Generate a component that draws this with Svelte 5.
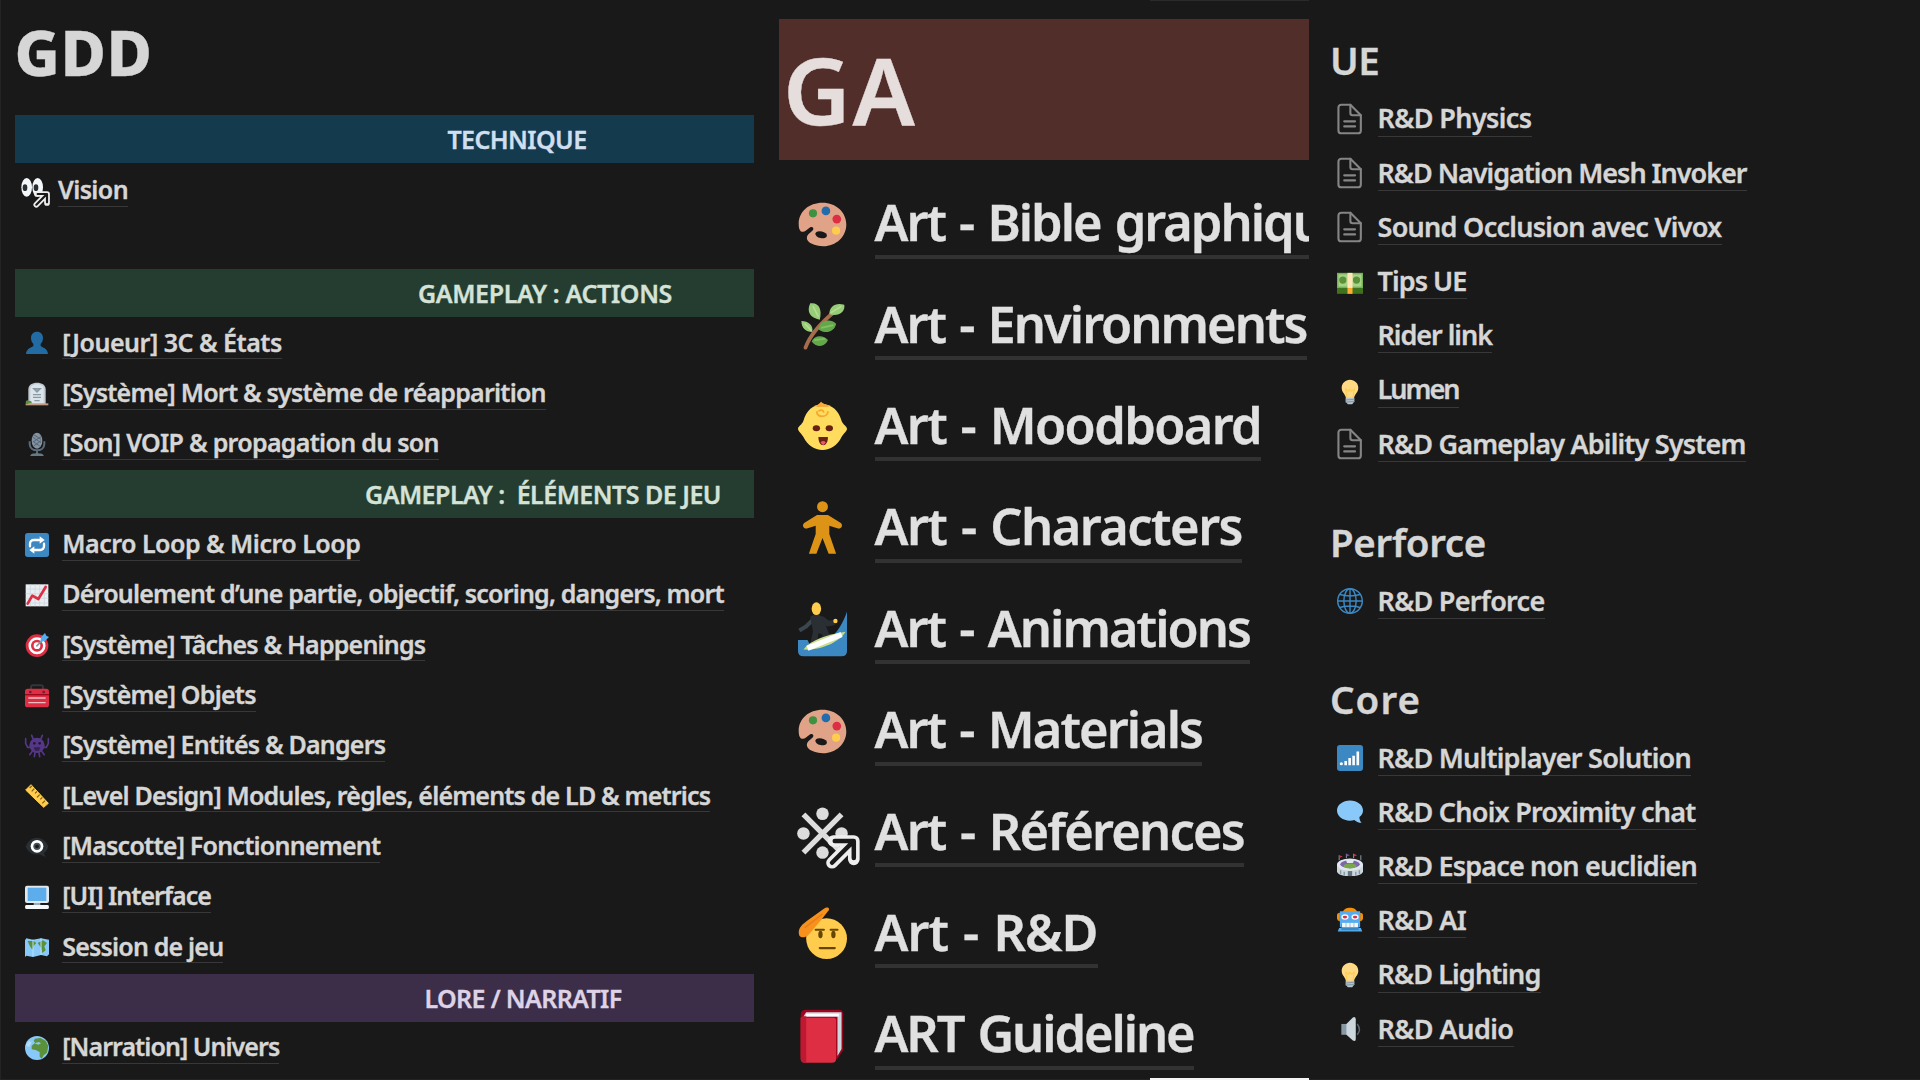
<script>
  // Small pictograms, all drawn on a 36 x 36 grid.
  const linkArrow =
    '<path d="M26 23.500h15V37M40.500 24L25 39.500" fill="none" stroke="#eee" stroke-width="8.600" stroke-linecap="round" stroke-linejoin="round"/><path d="M27 23.500h14V36M40.500 24L25 39.500" fill="none" stroke="#191919" stroke-width="3.300" stroke-linecap="round" stroke-linejoin="round"/>';
  const bulb =
    '<path d="M29.500 12.500C29.500 6 24.500 1 18 1S6.500 6 6.500 12.500c0 6 5.500 9 6 14.500h11c.5-5.500 6-8.500 6-14.500z" fill="#ffd983"/><path d="M14 27l-2-13 4 3 2-3 2 3 4-3-2 13" fill="none" stroke="#ffcc4d" stroke-width="1.500"/><path d="M12 26h12v5l-3 4h-6l-3-4z" fill="#b8c5cd"/><path d="M12 29l12-1M12 32l12-1" stroke="#8899a6" stroke-width="1.500"/>';
  const palette =
    '<path d="M18 2C8 2 .5 8.500.5 17.500c0 3 .5 4.500 1.500 5.500 2.500 1.500 4.500-1.500 7-3 1.500-.8 3 .5 2 2-1.500 2-4.500 3-4.500 6 0 3.500 6 6 12 6C28 34 35.500 27 35.500 18S28 2 18 2z" fill="#e0a387"/><ellipse cx="17" cy="25.500" rx="4.300" ry="2.500" transform="rotate(12 17 25.500)" fill="#191919"/><circle cx="11" cy="9.800" r="3" fill="#3e9140"/><circle cx="20.500" cy="8" r="3.200" fill="#226bac"/><circle cx="28.500" cy="14" r="3.200" fill="#dd2e44"/><circle cx="28" cy="22.500" r="3" fill="#ffcc4d"/>';
  const page =
    '<g fill="none" stroke="#858585" stroke-width="2.900" stroke-linejoin="round" stroke-linecap="round"><path d="M6-4.500h12.500L33 10v21a4 4 0 0 1-4 4H6a4 4 0 0 1-4-4V-.5a4 4 0 0 1 4-4z"/><path d="M18.500-4.500V7a3 3 0 0 0 3 3H33M10 18.500h15M10 25.500h15"/></g>';

  const icons = {
    page,
    bulb,
    palette,
    eyes:
      '<g transform="translate(0 -2)"><ellipse cx="8.500" cy="14.500" rx="8" ry="14" fill="#f5f8fa"/><ellipse cx="25" cy="14.500" rx="8" ry="14" fill="#f5f8fa"/><ellipse cx="6" cy="15" rx="3.500" ry="5" fill="#292f33"/><ellipse cx="22.500" cy="15" rx="3.500" ry="5" fill="#292f33"/></g><g transform="translate(-2 -1)">' + linkArrow + '</g>',
    bust:
      '<path d="M18 1c5.500 0 9 4 9 9.500 0 4-1.500 7-3.500 9v3c2 2.500 10.500 3 11 12H1.500c.5-9 9-9.500 11-12v-3C10.500 17.500 9 14.500 9 10.500 9 5 12.500 1 18 1z" fill="#226ba3"/>',
    grave:
      '<path d="M5 34V11C5 4 11 1 18 1s13 3 13 10v23z" fill="#bfcbd3"/><path d="M8 34V11c0-5 4-7.500 10-7.500S28 6 28 11v23z" fill="#dce4ea"/><path d="M13 10h10l-5 5zM12 19h12M12 23h12M14 28h8" stroke="#8899a6" stroke-width="2" fill="#99aab5"/><path d="M1 32h34v3H1z" fill="#c19a81"/><path d="M1 32c0-5 3-6 4-3 2-2 6 0 5 3z" fill="#5c913b"/>',
    mic:
      '<ellipse cx="18" cy="13" rx="8" ry="12" fill="#8292a0"/><path d="M12 8l12 8M12 14l10 7M13 4l11 7M24 7l-12 8M24 13l-11 8" stroke="#536371" stroke-width="1.400"/><path d="M7 14v4c0 6 5 9.500 11 9.500S29 24 29 18v-4M18 28v5" fill="none" stroke="#596b78" stroke-width="3"/><path d="M8 36c0-3 4-4 10-4s10 1 10 4z" fill="#687986"/>',
    repeat:
      '<rect width="36" height="36" rx="4" fill="#3b88c3"/><g fill="none" stroke="#fff" stroke-width="3.500" stroke-linecap="round"><path d="M7.500 20v-4a5.500 5.500 0 0 1 5.500-5.500h10M28.500 16v4a5.500 5.500 0 0 1-5.500 5.500H13"/></g><path d="M22 5l7.500 5.500L22 16zM14 20l-7.500 5.500L14 31z" fill="#fff"/>',
    chart:
      '<rect x="1" y="2" width="34" height="33" fill="#e8edf1"/><path d="M8 2v33M15 2v33M22 2v33M29 2v33M1 9h34M1 16h34M1 23h34M1 30h34" stroke="#c8d3dc" stroke-width="1"/><path d="M4 31l7-12 9 5L31 6" fill="none" stroke="#dd2e44" stroke-width="4" stroke-linecap="round" stroke-linejoin="round"/>',
    target:
      '<circle cx="18" cy="19" r="17" fill="#dd2e44"/><circle cx="18" cy="19" r="12.800" fill="#fff"/><circle cx="18" cy="19" r="9" fill="#dd2e44"/><circle cx="18" cy="19" r="5" fill="#fff"/><path d="M17 20L28 9" stroke="#8899a6" stroke-width="2.500"/><path d="M23 13l1-7 6-6 2 4 4 2-6 6z" fill="#55acee"/>',
    toolbox:
      '<path d="M9 8V5a3 3 0 0 1 3-3h12a3 3 0 0 1 3 3v3" fill="none" stroke="#31373d" stroke-width="3"/><path d="M0 11q0-4 4-4h28q4 0 4 4v20q0 4-4 4H4q-4 0-4-4z" fill="#dd2e44"/><path d="M0 15h36v2H0z" fill="#a0041e"/><circle cx="8" cy="12" r="2" fill="#66212c"/><circle cx="28" cy="12" r="2" fill="#66212c"/><path d="M5 21h26M5 28h26" stroke="#edbdc4" stroke-width="2"/>',
    monster:
      '<g fill="none" stroke="#553788" stroke-width="2.500" stroke-linecap="round"><path d="M8 20H4l-3-6V7M28 20h4l3-6V7M11 26l-4 5M25 26l4 5M15 28l-1 6M21 28l1 6M12 7l-2-5M24 7l2-5"/></g><circle cx="18" cy="17" r="11.500" fill="#553788"/><circle cx="14" cy="14" r="2" fill="#231634"/><circle cx="22" cy="14" r="2" fill="#231634"/><path d="M13 20h10l-2 5h-6z" fill="#342052"/>',
    ruler:
      '<path d="M9 1L35 29l-7 6L1 9z" fill="#ffcc4d" stroke="#ffcc4d" stroke-width="1.500" stroke-linejoin="round"/><path d="M10 3l-3 3M14 7l-4 4M18 11l-3 3M22 16l-4 4M26 20l-3 3M30 25l-4 4" stroke="#805c15" stroke-width="1.800"/>',
    eye:
      '<path d="M1 17C5 8 11 4 18 4s13 4 17 13c-1 5-3 8-7 10l3 6-10-4C11 31 4 25 1 17z" fill="#292f33"/><circle cx="18" cy="17" r="9.500" fill="#fff"/><circle cx="18" cy="17" r="5.500" fill="#46535d"/><circle cx="18" cy="17" r="2.800" fill="#171b1e"/>',
    monitor:
      '<path d="M13 25h10v6H13z" fill="#99aab5"/><rect y="1" width="36" height="26" rx="3" fill="#e1e8ed"/><rect x="4" y="4" width="28" height="20" fill="#5dadec"/><path d="M2 30h32q2 0 2 3t-2 3H2q-2 0-2-3t2-3z" fill="#f5f8fa"/>',
    map:
      '<path d="M0 8l2-3 10 2 12-2 12 2v22l-3 3-9-2-12 3-10-2-2 2z" fill="#88c9f9"/><path d="M4 9h9l4 3-4 4-2 6-4-6zM19 12l8-4 6 4-4 5 2 6-5 4-2-8z" fill="#5c913b"/><path d="M12 7v25M24 5v25" stroke="#b9e1fb" stroke-width="1.500"/>',
    earth:
      '<circle cx="18" cy="18" r="18" fill="#88c9f9"/><path d="M15 4l8-1 8 4 4 8-2 10-5 4-3 5-3-3v-7l-6-3-6-1 0-5 5-5-2-3z" fill="#5c913b"/><path d="M14 11l7-2 3 2-4 2z" fill="#88c9f9"/><path d="M1 14l5-7 4 3-4 7z" fill="#b5dcf7"/>',
    herb:
      '<path d="M5.500 33.500C9 24 16 16 27 7" fill="none" stroke="#a66c4b" stroke-width="2.800" stroke-linecap="round"/><path d="M9 1c6-1 9 4 7 12-7-1-10-6-7-12zM23 9c0-6 5-9 11-7 1 5-4 9-11 7zM2.500 14c5 0 9 3 8 8-5 0-8-3-8-8z" fill="#97cd77"/><path d="M15 20c1-7 9-8 13-4-1 6-8 8-13 4zM10 29c2-5 9-5 12-1-2 5-8 6-12 1z" fill="#62a84a"/><path d="M11 3l4 8M24 8l8-5M5 16l5 5" stroke="#b5dd93" stroke-width="1.200"/><path d="M17 19l9-2M12 28l8-1" stroke="#85bf65" stroke-width="1.200"/>',
    baby:
      '<path d="M18 1c7 0 12 5 14 12 1 3 4 4 4 6s-3 4-4 6c-3 6-8 9.500-14 9.500S7 31 4 25c-1-2-4-4-4-6s3-3 4-6C6 6 11 1 18 1z" fill="#ffdc5d"/><path d="M12 2c2 0 3-1 5-3 2 2 4 2 7 3-2 1-3 1-6 1s-4 0-6-1z" fill="#f9a93a"/><path d="M14 6c-1 5 8 5 8 0M15 6q3-2 4 1" fill="none" stroke="#f7a62f" stroke-width="1.300"/><ellipse cx="13.500" cy="18.500" rx="2.700" ry="2.200" fill="#662113"/><ellipse cx="23" cy="18.500" rx="2.700" ry="2.200" fill="#662113"/><path d="M15 25h7c0 4-1.500 6-3.500 6s-3.500-2-3.500-6z" fill="#662113"/><path d="M16.500 29q2-2 4 0l-2 2z" fill="#ea596e"/>',
    person:
      '<circle cx="18" cy="2" r="4" fill="#dc9316"/><path d="M14 8h8l9.500 6c2 2 0 4.500-2 4L23 16v6l5 14.500h-5.500L18 25l-4.500 11.500H8L13 22v-6l-6.500 2c-2 .5-4-2-2-4z" fill="#dc9316"/>',
    surfer:
      '<path d="M36 4v29q0 4-4 4H4q-4 0-4-4v-8h7l2 4c13-1 22-10 27-25z" fill="#3b88c3"/><path d="M11 10l-5 5-5 3" fill="none" stroke="#3b4650" stroke-width="3"/><path d="M17 9l5 4 5-1" fill="none" stroke="#292f33" stroke-width="4"/><path d="M9 8c2-2 7-2 9 0l5 13-2 6h-4l1-6-3-1-1 8H9l2-9z" fill="#292f33"/><ellipse cx="13.500" cy="2" rx="3.500" ry="4.700" fill="#ffcc4d"/><circle cx="27.500" cy="11" r="1.600" fill="#ffcc4d"/><path d="M4 32c5-7 18-11 31-13-5 8-19 14-31 13z" fill="#c6df8d"/><path d="M7 31l25-10" stroke="#fff" stroke-width="4"/>',
    reference:
      '<path d="M4 4l28 28M32 4L4 32" stroke="#ddd" stroke-width="4"/><circle cx="18" cy="3.500" r="4.600" fill="#ddd"/><circle cx="4" cy="18" r="4.600" fill="#ddd"/><circle cx="32" cy="18" r="4.600" fill="#ddd"/><circle cx="18" cy="32" r="4.600" fill="#ddd"/>' + linkArrow,
    salute:
      '<circle cx="21" cy="21" r="15" fill="#ffcc4d"/><path d="M1 19C-1 13 4 10 8 7L19-1c3-2 5 0 3 2l-4 5L8 18c-2 2-5 3-7 1z" fill="#f6911e"/><path d="M5 13L18 3" stroke="#e67c18" stroke-width="1"/><ellipse cx="16.500" cy="18" rx="1.600" ry="2.800" fill="#664500"/><ellipse cx="26" cy="18" rx="1.600" ry="2.800" fill="#664500"/><path d="M13 14.500h6M24 14.500h5M16 28h11" stroke="#664500" stroke-width="1.600" stroke-linecap="round"/>',
    book:
      '<path d="M6-1h24q3 0 3 3v27l-4 6H5q-3 0-3-3V3q0-4 4-4z" fill="#a0041e"/><path d="M4 4l2-3h26v27l-3 5V4z" fill="#ccd6dd"/><path d="M6 3h24" stroke="#fff" stroke-width="2"/><path d="M3 5h23q2 0 2 2v28q0 3-3 3H5q-3 0-3-3V5z" fill="#dd2e44"/><path d="M3 4h3v34H5q-3 0-3-3V5z" fill="#be1931"/>',
    money:
      '<path d="M0 4h36v29H0z" fill="#3e721d"/><path d="M0 4h36v21H0z" fill="#77b255"/><path d="M2 6h32v17H2z" fill="#a6d388"/><circle cx="8" cy="14" r="5" fill="#5c913b"/><circle cx="27" cy="14" r="5" fill="#5c913b"/><path d="M14.500 4h7v21h-7z" fill="#ffe8b6"/><path d="M14.500 25h7v8h-7z" fill="#ffac33"/>',
    globe:
      '<g fill="none" stroke="#3b88c3" stroke-width="2"><circle cx="18" cy="18" r="17"/><ellipse cx="18" cy="18" rx="8.500" ry="17"/><path d="M18 1v34M1 18h34M4 9q14 4 28 0M4 27q14-4 28 0"/></g>',
    bars:
      '<rect width="36" height="36" rx="4" fill="#3b88c3"/><circle cx="6" cy="26" r="2.200" fill="#fff"/><path d="M12 28v-6M17.500 28V18M23 28V15M28.800 28V9" stroke="#fff" stroke-width="3.600"/>',
    speech:
      '<path d="M18 2c10 0 18 6 18 14 0 4-2 7-5 9 0 3 1 6 3 8-4 0-8-2-10-4-2 .5-4 1-6 1C8 30 0 24 0 16S8 2 18 2z" fill="#88c9f9"/>',
    stadium:
      '<path d="M3 10V3M13 7V1M23 7V1M33 10V3" stroke="#8899a6" stroke-width="1.400"/><path d="M3 3l5 2-5 2zM23 1l5 2-5 2z" fill="#be3950"/><path d="M13 1l5 2-5 2z" fill="#7450a8"/><path d="M0 16v10c2 5 10 6 18 6s16-1 18-6V16z" fill="#ccd6dd"/><ellipse cx="18" cy="16" rx="18" ry="8.500" fill="#e1e8ed"/><ellipse cx="18" cy="15.500" rx="13.500" ry="5.500" fill="#8064ad"/><path d="M12 9h12l-2 5h-8z" fill="#e1e8ed"/><ellipse cx="18" cy="18" rx="9" ry="3.300" fill="#78a64b"/><path d="M5 24v5M10 26v5M26 26v5M31 24v5" stroke="#8899a6" stroke-width="2"/><path d="M15 25h6v7h-6z" fill="#66757f"/>',
    robot:
      '<path d="M8 7c2-8 18-8 20 0z" fill="#f4900c"/><path d="M0 12q0-4 4-4v12q-4-1-4-4zM36 12q0-4-4-4v12q4-1 4-4z" fill="#f4900c"/><path d="M4 6h28v22H4zM3 29h30l2 5H1z" fill="#55acee"/><path d="M6 24h24v8H6z" fill="#3b88c3"/><path d="M7 22h22v6H7z" fill="#f5f8fa"/><ellipse cx="11" cy="14" rx="5" ry="3.800" fill="#f5f8fa"/><ellipse cx="25" cy="14" rx="5" ry="3.800" fill="#f5f8fa"/><ellipse cx="11" cy="14" rx="3" ry="2" fill="#dd2e44"/><ellipse cx="25" cy="14" rx="3" ry="2" fill="#dd2e44"/><path d="M12.500 22v6M18 22v6M23.500 22v6" stroke="#8ab7d8" stroke-width="1.200"/>',
    speaker:
      '<path d="M6 11h9v15H6z" fill="#8899a6"/><path d="M13 11L22 2q4-2 4 3v27q0 4-4 2L13 26z" fill="#ccd6dd"/><path d="M28 11q6 8 0 15" fill="none" stroke="#596975" stroke-width="2"/>'
  };

  // Each row: [icon, label, label width in px]
  const gdd = [
    { title: 'TECHNIQUE', tone: 'blue', indent: 433, width: 139, rows: [['eyes', 'Vision', 70]] },
    {
      title: 'GAMEPLAY : ACTIONS', tone: 'green', indent: 403.500, width: 254,
      rows: [
        ['bust', '[Joueur] 3C & États', 219.500],
        ['grave', '[Système] Mort & système de réapparition', 483.500],
        ['mic', '[Son] VOIP & propagation du son', 376.500]
      ]
    },
    {
      title: 'GAMEPLAY :\u00a0 ÉLÉMENTS DE JEU', tone: 'green', indent: 350.500, width: 356,
      rows: [
        ['repeat', 'Macro Loop & Micro Loop', 298],
        ['chart', 'Déroulement d’une partie, objectif, scoring, dangers, mort', 661.500],
        ['target', '[Système] Tâches & Happenings', 363],
        ['toolbox', '[Système] Objets', 193.500],
        ['monster', '[Système] Entités & Dangers', 323],
        ['ruler', '[Level Design] Modules, règles, éléments de LD & metrics', 648],
        ['eye', '[Mascotte] Fonctionnement', 318],
        ['monitor', '[UI] Interface', 148.500],
        ['map', 'Session de jeu', 161]
      ]
    },
    { title: 'LORE / NARRATIF', tone: 'purple', indent: 410, width: 197, rows: [['earth', '[Narration] Univers', 217]] }
  ];

  const art = [
    ['palette', 'Art - Bible graphique', 476],
    ['herb', 'Art - Environments', 432],
    ['baby', 'Art - Moodboard', 386.500],
    ['person', 'Art - Characters', 367.500],
    ['surfer', 'Art - Animations', 375.500],
    ['palette', 'Art - Materials', 327.500],
    ['reference', 'Art - Références', 369.500],
    ['salute', 'Art - R&D', 223],
    ['book', 'ART Guideline', 319]
  ];

  const tech = [
    {
      title: 'UE', width: 49,
      rows: [
        ['page', 'R&D Physics', 154],
        ['page', 'R&D Navigation Mesh Invoker', 369],
        ['page', 'Sound Occlusion avec Vivox', 344],
        ['money', 'Tips UE', 89],
        ['', 'Rider link', 114.500],
        ['bulb', 'Lumen', 81],
        ['page', 'R&D Gameplay Ability System', 368]
      ]
    },
    { title: 'Perforce', width: 156, rows: [['globe', 'R&D Perforce', 167]] },
    {
      title: 'Core', width: 91,
      rows: [
        ['bars', 'R&D Multiplayer Solution', 313.500],
        ['speech', 'R&D Choix Proximity chat', 318],
        ['stadium', 'R&D Espace non euclidien', 319.500],
        ['robot', 'R&D AI', 88.500],
        ['bulb', 'R&D Lighting', 163],
        ['speaker', 'R&D Audio', 136]
      ]
    }
  ];

  // Tracks a label in or out so that it fills the width it was given.
  function fit(node, width) {
    const natural = node.getBoundingClientRect().width;
    node.style.letterSpacing = `${(width - natural) / node.textContent.length}px`;
  }
</script>

{#snippet row([icon, label, width])}
  <li class="row">
    <svg class="icon" viewBox="0 0 36 36" aria-hidden="true">{@html icons[icon] ?? ''}</svg>
    <a class="label"><span use:fit={width}>{label}</span></a>
  </li>
{/snippet}

<main class="board">
  <section class="column gdd">
    <h1><span use:fit={138}>GDD</span></h1>
    {#each gdd as group}
      <div class="group">
        <h2 class="bar {group.tone}" style:padding-left="{group.indent}px">
          <span use:fit={group.width}>{group.title}</span>
        </h2>
        <ul>{#each group.rows as item}{@render row(item)}{/each}</ul>
      </div>
    {/each}
  </section>

  <section class="column art">
    <h1><span use:fit={134}>GA</span></h1>
    <ul>{#each art as item}{@render row(item)}{/each}</ul>
    <i class="edge top"></i>
    <i class="edge bottom"></i>
  </section>

  <section class="column tech">
    {#each tech as group}
      <div class="group">
        <h2><span use:fit={group.width}>{group.title}</span></h2>
        <ul>{#each group.rows as item}{@render row(item)}{/each}</ul>
      </div>
    {/each}
  </section>
</main>

<style>
  :global(body) {
    background: #191919;
    overflow: hidden;
  }
  .board {
    display: grid;
    grid-template-columns: 779px 530px 1fr;
    width: 1920px;
    height: 1080px;
    overflow: hidden;
    box-sizing: border-box;
    background: #191919;
    box-shadow: inset 1px 0 #242424, inset 0 -1px #232323;
    color: #d6d6d6;
    font-family: 'Noto Sans', 'Open Sans', sans-serif;
    font-weight: 600;
  }
  h1,
  h2,
  ul {
    margin: 0;
    padding: 0;
    font-weight: 600;
  }
  ul {
    list-style: none;
  }
  span {
    display: inline-block;
    white-space: pre;
    -webkit-text-stroke: 0.350px currentColor;
  }
  .column {
    min-width: 0;
    height: 1080px;
    overflow: hidden;
    box-sizing: border-box;
  }
  .row {
    display: flex;
    align-items: flex-end;
    box-sizing: border-box;
  }
  .icon {
    flex: none;
    overflow: visible;
  }
  .label {
    flex: none;
    border-bottom: 1.500px solid #383838;
  }

  .gdd {
    padding: 20px 0 0 14.500px;
  }
  .gdd h1 {
    height: 95px;
    font-size: 62px;
    font-weight: 800;
    line-height: 65px;
  }
  .bar {
    width: 739px;
    height: 48px;
    margin-bottom: 2.330px;
    box-sizing: border-box;
    font-size: 25px;
    line-height: 49px;
  }
  .blue {
    background: #143a4e;
    color: #cfdfee;
  }
  .green {
    background: #243d30;
    color: #d5e2d8;
  }
  .purple {
    background: #3c2d49;
    color: #ded3e6;
  }
  .gdd .row {
    height: 50.330px;
    padding: 0 0 10.330px 10.500px;
    gap: 13.300px;
    font-size: 25px;
    line-height: 31.600px;
  }
  .gdd .icon {
    width: 24px;
    height: 24px;
    margin-bottom: 4px;
  }
  .gdd .group:nth-of-type(1) {
    height: 154px;
  }
  .gdd .group:nth-of-type(1) ul {
    padding-top: 1.200px;
  }
  .gdd .group:nth-of-type(1) .row {
    padding-left: 6px;
    gap: 13.500px;
  }

  .art {
    position: relative;
    padding-top: 19px;
  }
  .art h1 {
    height: 140.500px;
    margin-bottom: 7.800px;
    padding-left: 4px;
    background: #512e2a;
    color: #e6dedd;
    font-size: 93px;
    line-height: 141px;
  }
  .art .row {
    height: 101.400px;
    padding: 0 0 10px 19px;
    gap: 27.500px;
    font-size: 50.500px;
    line-height: 64.500px;
    word-spacing: 3px;
  }
  .art .icon {
    width: 49px;
    height: 49px;
    margin-bottom: 9.500px;
  }
  .art .label {
    border-bottom: 4px solid #323232;
    color: #e0e0e0;
  }
  .edge {
    position: absolute;
    right: 0;
    width: 159px;
  }
  .edge.top {
    top: 0;
    height: 1px;
    background: #2a2a2a;
  }
  .edge.bottom {
    bottom: 0;
    height: 2px;
    background: #f4f4f4;
  }

  .tech {
    padding: 40px 0 0 21px;
  }
  .tech h2 {
    height: 40px;
    margin-bottom: 10.500px;
    font-size: 38.500px;
    line-height: 40px;
  }
  .tech .group + .group {
    margin-top: 52px;
  }
  .tech .group + .group h2 {
    margin-bottom: 11px;
  }
  .tech .group:last-child {
    margin-top: 51.700px;
  }
  .tech .row {
    height: 54.200px;
    padding: 0 0 8px 7px;
    gap: 14.500px;
    font-size: 27px;
    line-height: 35.200px;
  }
  .tech .icon {
    width: 26px;
    height: 26px;
    margin-bottom: 3px;
  }
  .tech .group + .group .icon {
    margin-bottom: 5px;
  }
</style>
